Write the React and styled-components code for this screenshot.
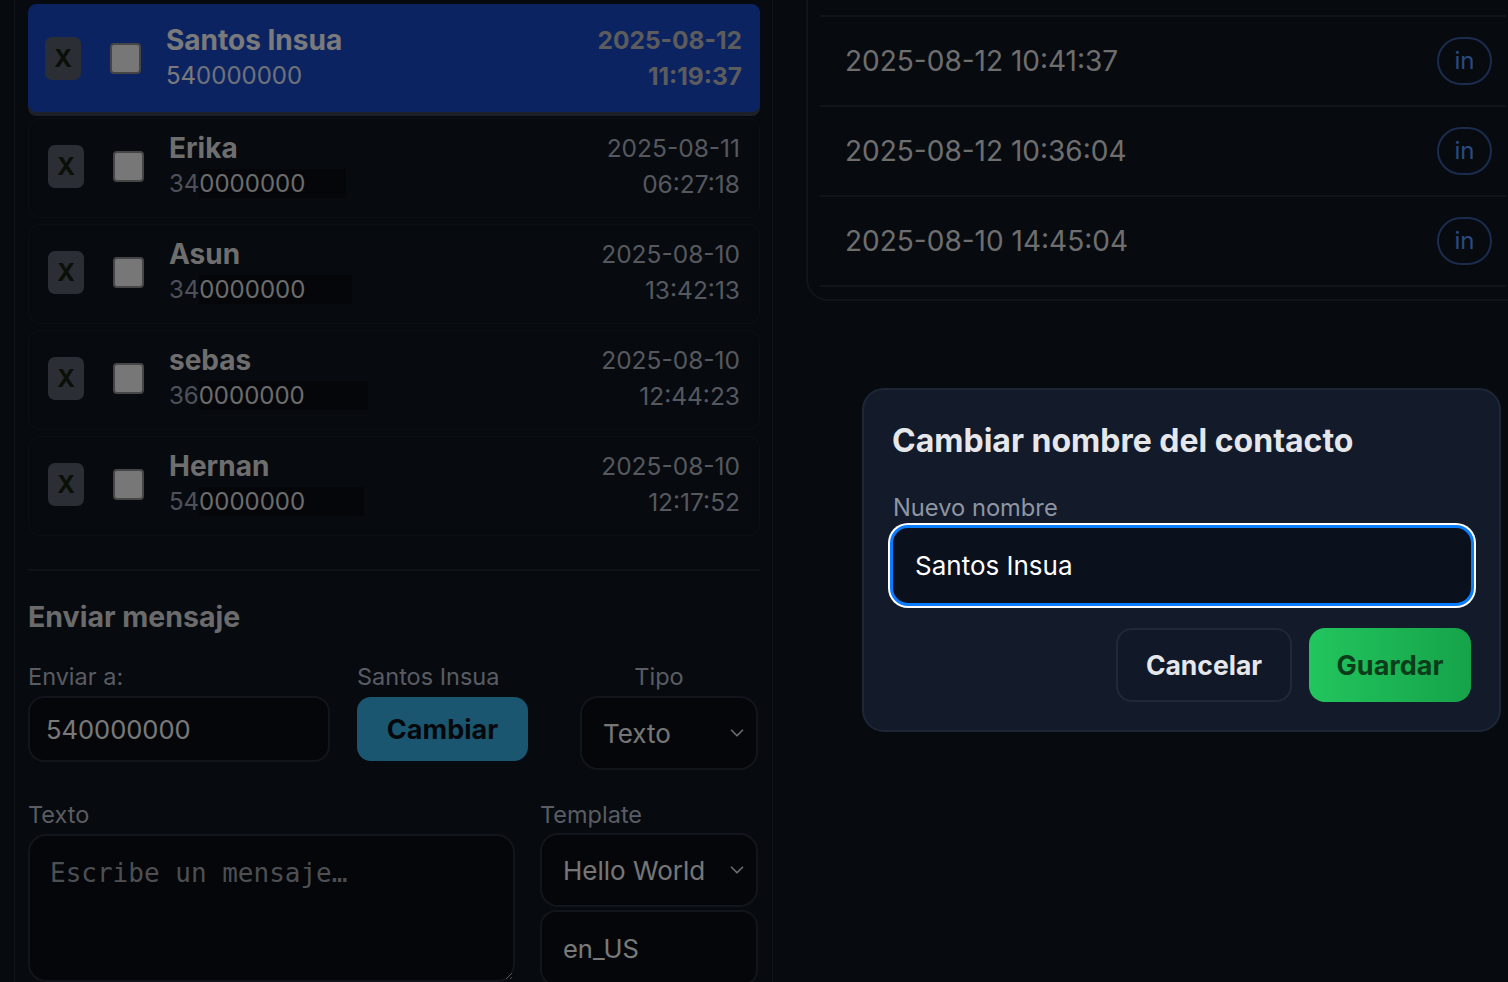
import styled, { createGlobalStyle, css } from "styled-components";
import { ChevronDown } from "lucide-react";

const GlobalStyle = createGlobalStyle`
  * { box-sizing: border-box; }
  html, body {
    margin: 0;
    height: 100%;
    background: #0e141e;
    font-family: Inter, "Noto Sans", sans-serif;
    overflow: hidden;
  }
`;

const contacts = [
  { id: 1, name: "Santos Insua", prefix: "54", date: "2025-08-12", time: "11:19:37", selected: true, mask: 0 },
  { id: 2, name: "Erika", prefix: "34", date: "2025-08-11", time: "06:27:18", mask: 41 },
  { id: 3, name: "Asun", prefix: "34", date: "2025-08-10", time: "13:42:13", mask: 47 },
  { id: 4, name: "sebas", prefix: "36", date: "2025-08-10", time: "12:44:23", mask: 63 },
  { id: 5, name: "Hernan", prefix: "54", date: "2025-08-10", time: "12:17:52", mask: 59 },
];

const history = ["2025-08-12 10:41:37", "2025-08-12 10:36:04", "2025-08-10 14:45:04"];

const Page = styled.div`
  display: flex;
  height: 100vh;
  overflow: hidden;
`;

const LeftPanel = styled.div`
  width: 759px;
  flex-shrink: 0;
  margin-left: 14px;
  padding: 4px 12px 0 13px;
  border-left: 1px solid #222834;
  border-right: 1px solid #222834;
`;

const ContactList = styled.ul`
  display: flex;
  flex-direction: column;
  gap: 6px;
  list-style: none;
  margin: 0;
  padding: 0;
`;

const ContactItem = styled.li`
  display: flex;
  align-items: center;
  height: 100px;
  padding: 0 19px 4px 19px;
  border: 1px solid #1a1f2a;
  border-radius: 12px;
  ${(p) =>
    p.$selected &&
    css`
      height: 108px;
      padding: 0 17px 0 16px;
      background: #1846c4;
      border-color: #1846c4;
      border-radius: 8px;
      box-shadow: 0 4px 0 #3a4050;
    `}
`;

const RemoveButton = styled.button`
  width: 36px;
  height: 43px;
  flex-shrink: 0;
  border: none;
  border-radius: 7px;
  background: #565c68;
  color: #14200f;
  font-family: Inter, sans-serif;
  font-size: 24px;
  font-weight: 700;
  padding: 0;
`;

const Check = styled.span`
  width: 31px;
  height: 31px;
  flex-shrink: 0;
  margin-left: 29px;
  border: 2px solid #8c8c8c;
  border-radius: 4px;
  background: #eeeeee;
`;

const Info = styled.div`
  flex: 1;
  margin-left: 25px;
`;

const Name = styled.div`
  font-size: 28px;
  font-weight: 700;
  line-height: 36px;
  color: ${(p) => (p.$selected ? "#f4f4f4" : "#dcdcdc")};
`;

const Phone = styled.div`
  font-size: 24px;
  line-height: 36px;
  color: ${(p) => (p.$selected ? "#f4f4f4" : "#9ca2b2")};
`;

const Masked = styled.span`
  color: ${(p) => (p.$selected ? "#dde2f4" : "#d8d8d8")};
  background: ${(p) => (p.$selected ? "transparent" : "#080c14")};
`;

const Stamp = styled.div`
  text-align: right;
  font-size: 24.5px;
  line-height: 36px;
  color: ${(p) => (p.$selected ? "#b8b8b8" : "#aab0bc")};
  font-weight: ${(p) => (p.$selected ? 700 : 400)};
`;

const Divider = styled.hr`
  margin: 33px 0 0;
  border: none;
  border-top: 2px solid #1e2430;
`;

const SectionTitle = styled.h2`
  margin: 28px 0 0;
  font-size: 28.5px;
  line-height: 36px;
  font-weight: 700;
  color: #d6d6d6;
`;

const FieldRow = styled.div`
  display: flex;
  align-items: flex-start;
  margin-top: ${(p) => p.$top}px;
`;

const Field = styled.div`
  display: flex;
  flex-direction: column;
  width: ${(p) => p.$width}px;
  margin-left: ${(p) => p.$left || 0}px;
  gap: ${(p) => p.$gap ?? 4}px;
`;

const Label = styled.label`
  font-size: 23.5px;
  line-height: 28px;
  color: #b2b8c4;
  margin-bottom: 1px;
  text-align: ${(p) => (p.$center ? "center" : "left")};
  padding-right: ${(p) => (p.$center ? 20 : 0)}px;
`;

const TextInput = styled.input`
  width: 100%;
  height: ${(p) => p.$height || 66}px;
  padding: 0 ${(p) => p.$pad || 16}px;
  border: 2px solid #242a36;
  border-radius: 16px;
  background: #080c14;
  color: #f2f2f2;
  font-family: Inter, sans-serif;
  font-size: 25.5px;
  outline: none;
`;

const ActionButton = styled.button`
  height: 64px;
  border: none;
  border-radius: 14px;
  background: #36ace0;
  color: #0a1016;
  font-family: Inter, sans-serif;
  font-size: 27px;
  font-weight: 700;
  margin-top: 1px;
`;

const SelectBox = styled.div`
  display: flex;
  align-items: center;
  justify-content: space-between;
  height: ${(p) => p.$height}px;
  padding: 0 8px 0 21px;
  border: 2px solid #242a36;
  border-radius: 18px;
  background: #080c14;
  color: #ececec;
  font-size: 26px;

  svg {
    color: #dcdcdc;
  }
`;

const MessageArea = styled.textarea`
  width: 100%;
  height: 148px;
  padding: 22px 20px;
  border: 2px solid #242a36;
  border-radius: 18px;
  background: #080c14;
  color: #f2f2f2;
  font-family: "DejaVu Sans Mono", monospace;
  font-size: 26px;
  resize: vertical;
  outline: none;

  &::placeholder {
    color: #9a9ea6;
  }
`;

const RightArea = styled.div`
  flex: 1;
  padding-left: 33px;
  overflow: hidden;
`;

const HistoryCard = styled.div`
  width: 715px;
  padding: 15px 13px 12px 12px;
  border: 2px solid #222834;
  border-top: none;
  border-radius: 0 0 0 22px;
`;

const HistoryRow = styled.div`
  display: flex;
  align-items: center;
  justify-content: space-between;
  height: 90px;
  padding: 0 14px 1px 25px;
  border-top: 2px solid #222834;
  font-size: 28px;
  color: #dcdcdc;

  &:last-child {
    height: 92px;
    border-bottom: 2px solid #222834;
  }
`;

const DirectionPill = styled.span`
  display: flex;
  align-items: center;
  justify-content: center;
  width: 55px;
  height: 48px;
  border: 2px solid #36589c;
  border-radius: 24px;
  font-size: 24px;
  color: #5494ff;
`;

const Backdrop = styled.div`
  position: fixed;
  inset: 0;
  background: rgba(0, 0, 0, 0.5);
`;

const Modal = styled.div`
  position: absolute;
  left: 862px;
  top: 388px;
  width: 639px;
  padding: 31px 25px 28px 26px;
  border: 2px solid #1f2737;
  border-radius: 22px;
  background: #131a29;
`;

const ModalTitle = styled.h3`
  margin: 0 0 0 2px;
  font-size: 32px;
  line-height: 40px;
  font-weight: 700;
  color: #e6e7ea;
`;

const ModalLabel = styled.label`
  display: block;
  margin: 33px 0 0 3px;
  font-size: 23.7px;
  line-height: 28px;
  color: #8e95a3;
`;

const FocusedInput = styled.input`
  display: block;
  width: 100%;
  height: 81px;
  margin-top: 3px;
  padding: 0 22px;
  border: 3px solid #0a7cff;
  border-radius: 18px;
  box-shadow: 0 0 0 2px #ffffff;
  background: #0b101d;
  color: #ffffff;
  font-family: Inter, sans-serif;
  font-size: 26px;
  outline: none;
`;

const ModalActions = styled.div`
  display: flex;
  justify-content: flex-end;
  gap: 17px;
  margin-top: 22px;
  padding-right: 3px;
`;

const ModalButton = styled.button`
  height: 74px;
  width: ${(p) => p.$width}px;
  border-radius: 16px;
  font-family: Inter, sans-serif;
  font-size: 26.5px;
  font-weight: 700;
  border: 2px solid #212939;
  background: #111827;
  color: #e5e7eb;
  ${(p) =>
    p.$primary &&
    css`
      border: none;
      background: linear-gradient(90deg, #22c55e, #16a34a);
      color: #0b3d1a;
      font-size: 27px;
    `}
`;

function Contact({ contact }) {
  const sel = contact.selected;
  return (
    <ContactItem $selected={sel}>
      <RemoveButton>X</RemoveButton>
      <Check />
      <Info>
        <Name $selected={sel}>{contact.name}</Name>
        <Phone $selected={sel}>
          {contact.prefix}
          <Masked $selected={sel} style={{ paddingRight: contact.mask }}>
            0000000
          </Masked>
        </Phone>
      </Info>
      <Stamp $selected={sel}>
        <div>{contact.date}</div>
        <div>{contact.time}</div>
      </Stamp>
    </ContactItem>
  );
}

export default function App() {
  return (
    <>
      <GlobalStyle />
      <Page>
        <LeftPanel>
          <ContactList>
            {contacts.map((c) => (
              <Contact key={c.id} contact={c} />
            ))}
          </ContactList>

          <Divider />
          <SectionTitle>Enviar mensaje</SectionTitle>

          <FieldRow $top={28}>
            <Field $width={302}>
              <Label>Enviar a:</Label>
              <TextInput defaultValue="540000000" />
            </Field>
            <Field $width={171} $left={27}>
              <Label>Santos Insua</Label>
              <ActionButton>Cambiar</ActionButton>
            </Field>
            <Field $width={178} $left={52}>
              <Label $center>Tipo</Label>
              <SelectBox $height={74}>
                <span>Texto</span>
                <ChevronDown size={22} strokeWidth={1.8} />
              </SelectBox>
            </Field>
          </FieldRow>

          <FieldRow $top={31}>
            <Field $width={487}>
              <Label>Texto</Label>
              <MessageArea placeholder="Escribe un mensaje…" />
            </Field>
            <Field $width={218} $left={25} $gap={3}>
              <Label>Template</Label>
              <SelectBox $height={74}>
                <span>Hello World</span>
                <ChevronDown size={22} strokeWidth={1.8} />
              </SelectBox>
              <TextInput $height={76} $pad={21} defaultValue="en_US" />
            </Field>
          </FieldRow>
        </LeftPanel>

        <RightArea>
          <HistoryCard>
            {history.map((h) => (
              <HistoryRow key={h}>
                <span>{h}</span>
                <DirectionPill>in</DirectionPill>
              </HistoryRow>
            ))}
          </HistoryCard>
        </RightArea>

        <Backdrop>
          <Modal>
            <ModalTitle>Cambiar nombre del contacto</ModalTitle>
            <ModalLabel>Nuevo nombre</ModalLabel>
            <FocusedInput defaultValue="Santos Insua" />
            <ModalActions>
              <ModalButton $width={176}>Cancelar</ModalButton>
              <ModalButton $width={162} $primary>
                Guardar
              </ModalButton>
            </ModalActions>
          </Modal>
        </Backdrop>
      </Page>
    </>
  );
}
